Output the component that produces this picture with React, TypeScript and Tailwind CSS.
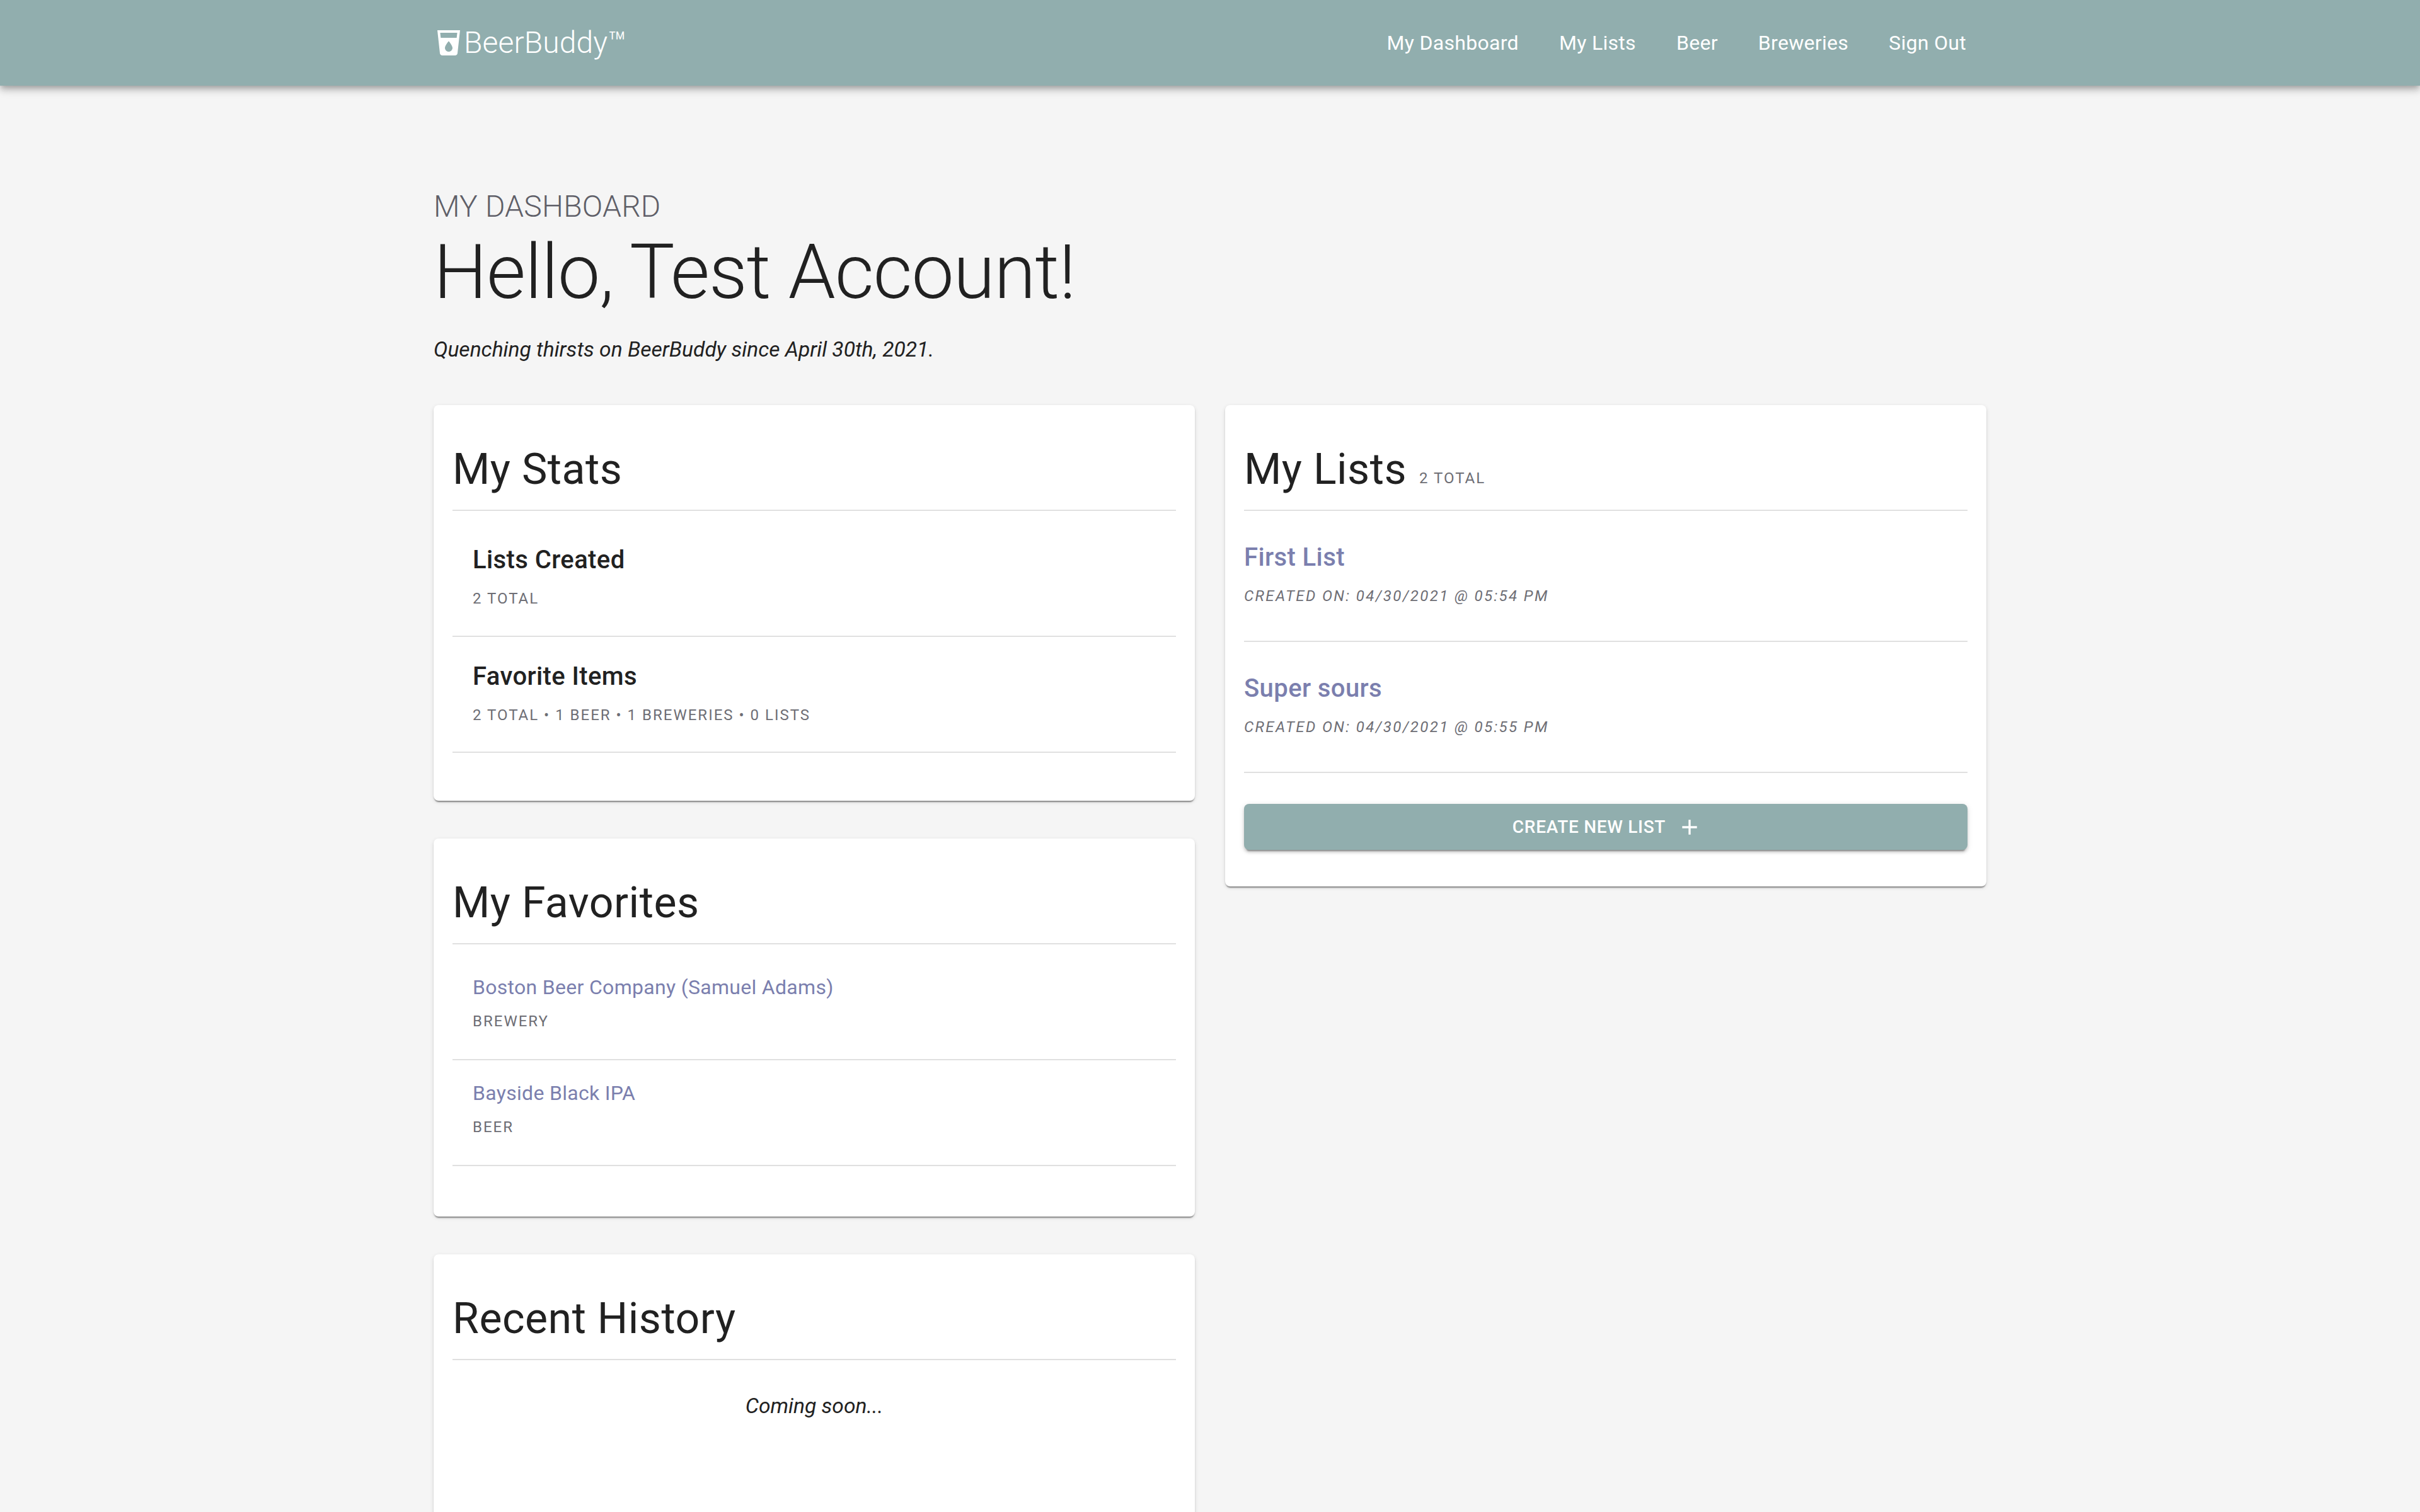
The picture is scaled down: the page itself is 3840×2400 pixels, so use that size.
const NavLink = ({ label }: { label: string }) => (
  <a className="text-[32px] leading-[44px] tracking-[0.3px] text-white">{label}</a>
);

const CardTitle = ({ title, note }: { title: string; note?: string }) => (
  <div className="flex h-[168px] items-end border-b-2 border-[#e0e0e0] pb-[24px]">
    <h4 className="text-[68px] leading-[80px] tracking-[0.5px] text-[#212121]">{title}</h4>
    {note && <span className="mb-[10px] ml-[20px] text-[24px] leading-[32px] tracking-[2px] text-[#6e6e75]">{note}</span>}
  </div>
);

const Card = ({ className, children }: { className?: string; children: React.ReactNode }) => (
  <div className={`rounded-[8px] bg-white px-[30px] shadow-[0_4px_2px_-2px_rgba(0,0,0,0.3),0_2px_2px_0_rgba(0,0,0,0.14),0_2px_6px_0_rgba(0,0,0,0.12)] ${className ?? ''}`}>
    {children}
  </div>
);

const Overline = ({ text, italic }: { text: string; italic?: boolean }) => (
  <div className={`text-[24px] leading-[32px] text-[#6e6e75] ${italic ? 'italic tracking-[2.4px]' : 'tracking-[2px]'}`}>{text}</div>
);

const App = () => {
  return (
    <div className="h-[2400px] overflow-hidden bg-[#f5f5f5] font-['Roboto',sans-serif]">
      <header className="h-[136px] bg-[#91aeae] shadow-[0_4px_8px_-2px_rgba(0,0,0,0.2),0_8px_10px_0_rgba(0,0,0,0.14),0_2px_20px_0_rgba(0,0,0,0.12)]">
        <div className="mx-auto flex h-full w-[2464px] items-center justify-between pr-[32px]">
          <div className="flex items-center text-white">
            <svg viewBox="0 0 24 24" className="h-[48px] w-[48px]" fill="currentColor">
              <path d="M3 2l2.01 18.23C5.13 21.23 5.97 22 7 22h10c1.03 0 1.87-.77 1.99-1.77L21 2H3zm9 17c-1.66 0-3-1.34-3-3 0-2 3-5.4 3-5.4s3 3.4 3 5.4c0 1.66-1.34 3-3 3zm6.33-11H5.67l-.44-4h13.53l-.43 4z" />
            </svg>
            <span className="text-[48px] font-light leading-[56px] tracking-[0.1px]">BeerBuddy™</span>
          </div>
          <nav className="flex gap-[64px]">
            <NavLink label="My Dashboard" />
            <NavLink label="My Lists" />
            <NavLink label="Beer" />
            <NavLink label="Breweries" />
            <NavLink label="Sign Out" />
          </nav>
        </div>
      </header>

      <main className="mx-auto w-[2464px] pt-[164px]">
        <div className="text-[48px] font-light leading-[56px] tracking-[0.2px] text-[#5f5f68]">MY DASHBOARD</div>
        <h1 className="mt-[6px] text-[120px] font-light leading-[140px] tracking-[-1px] text-[#212121]">Hello, Test Account!</h1>
        <p className="mt-[29px] text-[33.6px] italic leading-[48px] text-[#212121]">Quenching thirsts on BeerBuddy since April 30th, 2021.</p>

        <div className="mt-[64px] flex items-start gap-[48px]">
          <div className="flex w-[1208px] flex-col gap-[60px]">
            <Card className="h-[628px]">
              <CardTitle title="My Stats" />
              <div className="h-[200px] border-b-2 border-[#e0e0e0] pl-[32px] pt-[54px]">
                <div className="text-[40px] font-medium leading-[48px] tracking-[0.4px] text-[#212121]">Lists Created</div>
                <div className="mt-[21px]"><Overline text="2 TOTAL" /></div>
              </div>
              <div className="h-[184px] border-b-2 border-[#e0e0e0] pl-[32px] pt-[39px]">
                <div className="text-[40px] font-medium leading-[48px] tracking-[0.4px] text-[#212121]">Favorite Items</div>
                <div className="mt-[21px]"><Overline text="2 TOTAL • 1 BEER • 1 BREWERIES • 0 LISTS" /></div>
              </div>
            </Card>
            <Card className="h-[600px]">
              <CardTitle title="My Favorites" />
              <div className="h-[184px] border-b-2 border-[#e0e0e0] pl-[32px] pt-[44px]">
                <a className="block text-[32px] leading-[48px] tracking-[0.3px] text-[#7b7fae]">Boston Beer Company (Samuel Adams)</a>
                <div className="mt-[14px]"><Overline text="BREWERY" /></div>
              </div>
              <div className="h-[168px] border-b-2 border-[#e0e0e0] pl-[32px] pt-[28px]">
                <a className="block text-[32px] leading-[48px] tracking-[0.3px] text-[#7b7fae]">Bayside Black IPA</a>
                <div className="mt-[14px]"><Overline text="BEER" /></div>
              </div>
            </Card>
            <Card className="h-[600px]">
              <CardTitle title="Recent History" />
              <p className="pt-[49px] text-center text-[33.6px] italic leading-[48px] text-[#212121]">Coming soon...</p>
            </Card>
          </div>

          <Card className="h-[764px] w-[1208px]">
            <CardTitle title="My Lists" note="2 TOTAL" />
            <div className="h-[208px] border-b-2 border-[#e0e0e0] pt-[50px]">
              <a className="block text-[40px] font-medium leading-[48px] tracking-[0.4px] text-[#7b7fae]">First List</a>
              <div className="mt-[21px]"><Overline text="CREATED ON: 04/30/2021 @ 05:54 PM" italic /></div>
            </div>
            <div className="h-[208px] border-b-2 border-[#e0e0e0] pt-[50px]">
              <a className="block text-[40px] font-medium leading-[48px] tracking-[0.4px] text-[#7b7fae]">Super sours</a>
              <div className="mt-[21px]"><Overline text="CREATED ON: 04/30/2021 @ 05:55 PM" italic /></div>
            </div>
            <button className="mt-[49px] flex h-[73px] w-full items-center justify-center rounded-[8px] bg-[#91aeae] pl-[5px] text-[28px] font-medium tracking-[0.7px] text-white shadow-[0_6px_2px_-4px_rgba(0,0,0,0.3),0_4px_4px_0_rgba(0,0,0,0.14),0_2px_10px_0_rgba(0,0,0,0.12)]">
              CREATE NEW LIST
              <svg viewBox="0 0 24 24" className="ml-[18px] h-[40px] w-[40px]" fill="currentColor">
                <path d="M19 13h-6v6h-2v-6H5v-2h6V5h2v6h6v2z" />
              </svg>
            </button>
          </Card>
        </div>
      </main>
    </div>
  );
};

export default App;
